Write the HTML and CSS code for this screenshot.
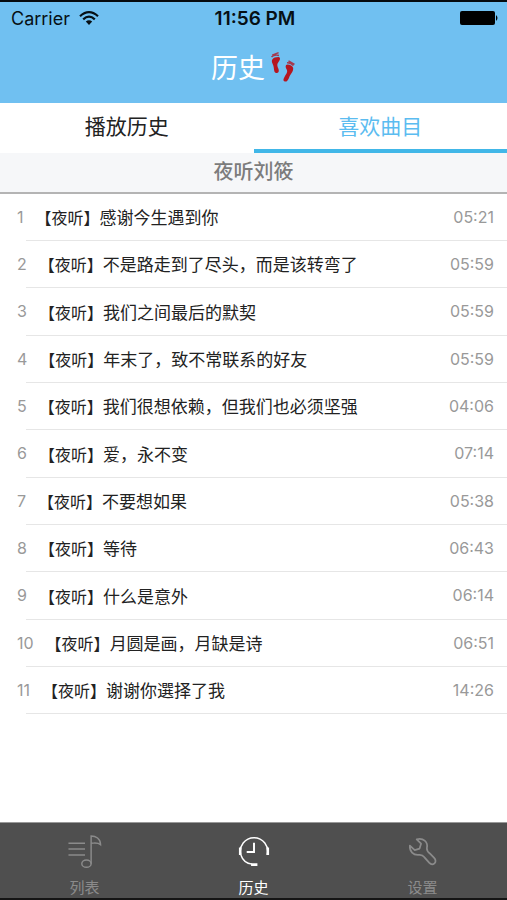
FILE: index.html
```html
<!DOCTYPE html>
<html lang="zh-CN">
<head>
<meta charset="utf-8">
<meta name="viewport" content="width=device-width, initial-scale=1">
<title>历史</title>
<link rel="stylesheet" href="styles.css">
</head>
<body>
<div class="app">
  <header class="header">
    <div class="status">
      <div class="carrier">
        <span>Carrier</span>
        <svg width="20" height="16" viewBox="0 0 20 16" fill="none" stroke="#071015" stroke-width="2.2" aria-hidden="true">
          <path d="M1 6.200Q10-2 19 6.200M4.200 9.400Q10 4 15.800 9.400"/>
          <path d="M6.800 11.600Q10 8.800 13.200 11.600L10 15z" fill="#071015" stroke="none"/>
        </svg>
      </div>
      <span class="clock">11:56 PM</span>
      <svg class="battery" width="39" height="16" viewBox="0 0 39 16" aria-hidden="true">
        <rect x="0" y="1" width="35" height="14" rx="2"/>
        <path d="M36 5q3 3 0 6z"/>
      </svg>
    </div>
    <h1 class="title">
      <span>历史</span>
      <svg width="26" height="32" viewBox="0 0 26 32" fill="#b51620" aria-hidden="true">
        <path d="M2 9C3 6.600 6 6 8.500 6C11 6.500 10 9 8.500 11C6.500 13.500 7.500 15.500 8.500 18C9.500 21 8 22.500 6 22C3.600 21.300 4.300 17.500 3.300 14.500C2.600 12.500 1.400 10.800 2 9z"/>
        <path d="M1.500 6Q4 3.400 9 4.400M2.200 4.300L8.600 1.600" fill="none" stroke="#a43b50" stroke-width="1.500"/>
        <path d="M23.200 17C22.600 14.600 20 13.600 17.500 13.500C15 13.800 15.500 16.500 16.600 18.300C18 20.800 16.500 22.500 15 25C13.500 27.600 12.500 30 15 30.500C18 31 18.500 27.500 20 24.500C21.400 22 23.600 20 23.200 17z"/>
        <path d="M17 11.800Q21 11.500 23.400 14.600M18.500 9.800L24.500 13.300" fill="none" stroke="#a43b50" stroke-width="1.500"/>
      </svg>
    </h1>
  </header>

  <div class="tabs">
    <button class="tab" type="button">播放历史</button>
    <button class="tab tab-active" type="button">喜欢曲目</button>
  </div>

  <main class="content">
    <h2 class="section">夜听刘筱</h2>
    <ol class="tracks">
      <li class="track"><span class="num">1</span><span class="name"><span class="tag">【夜听】</span>感谢今生遇到你</span><time class="time">05:21</time></li>
      <li class="track"><span class="num">2</span><span class="name"><span class="tag">【夜听】</span>不是路走到了尽头，而是该转弯了</span><time class="time">05:59</time></li>
      <li class="track"><span class="num">3</span><span class="name"><span class="tag">【夜听】</span>我们之间最后的默契</span><time class="time">05:59</time></li>
      <li class="track"><span class="num">4</span><span class="name"><span class="tag">【夜听】</span>年末了，致不常联系的好友</span><time class="time">05:59</time></li>
      <li class="track"><span class="num">5</span><span class="name"><span class="tag">【夜听】</span>我们很想依赖，但我们也必须坚强</span><time class="time">04:06</time></li>
      <li class="track"><span class="num">6</span><span class="name"><span class="tag">【夜听】</span>爱，永不变</span><time class="time">07:14</time></li>
      <li class="track"><span class="num">7</span><span class="name"><span class="tag">【夜听】</span>不要想如果</span><time class="time">05:38</time></li>
      <li class="track"><span class="num">8</span><span class="name"><span class="tag">【夜听】</span>等待</span><time class="time">06:43</time></li>
      <li class="track"><span class="num">9</span><span class="name"><span class="tag">【夜听】</span>什么是意外</span><time class="time">06:14</time></li>
      <li class="track"><span class="num">10</span><span class="name"><span class="tag">【夜听】</span>月圆是画，月缺是诗</span><time class="time">06:51</time></li>
      <li class="track"><span class="num">11</span><span class="name"><span class="tag">【夜听】</span>谢谢你選择了我</span><time class="time">14:26</time></li>
    </ol>
  </main>

  <nav class="nav">
    <a class="nav-item" href="#list">
      <svg width="36" height="36" viewBox="0 0 36 36" fill="none" stroke="currentColor" stroke-width="1.500" aria-hidden="true">
        <path d="M1 9.500h17M1 15.500h17M1 21.500h17"/>
        <ellipse cx="19.500" cy="30.500" rx="4.800" ry="3.800"/>
        <path d="M24.300 30.500V2C29 2 34 4.500 34 11C31 8.500 28 9.500 24.300 9.500"/>
      </svg>
      <span>列表</span>
    </a>
    <a class="nav-item nav-active" href="#history">
      <svg width="36" height="36" viewBox="0 0 36 36" fill="none" stroke="currentColor" stroke-width="1.500" aria-hidden="true">
        <path d="M4.500 21.500A14 14 0 1 1 31.500 21.500M4.500 21.500A14 14 0 0 0 16 31"/>
        <path d="M18 9v9.500h-7.500" stroke-width="2"/>
        <path d="M3.800 14v7.500M32.200 14v7.500M15 31.500h6.500" stroke-width="2.600"/>
      </svg>
      <span>历史</span>
    </a>
    <a class="nav-item" href="#settings">
      <svg width="36" height="36" viewBox="0 0 36 36" fill="none" stroke="currentColor" stroke-width="1.800" stroke-linejoin="round" aria-hidden="true">
        <path d="M11.500 5.500C18 3.500 23.500 8 22 14.500C21.800 17 23 18.500 25 20L29.500 24.500C33.500 29 28 33.500 24.300 29.500L19.500 24C18 22 16.500 21 13.500 21.500C8 22 4 18 4.500 12L9.500 16.500L14.500 15L16 10z"/>
      </svg>
      <span>设置</span>
    </a>
  </nav>
</div>
</body>
</html>
```
FILE: styles.css
```css
* {
  box-sizing: border-box;
}

body {
  margin: 0;
  background: #fff;
  color: #222;
  font-family: Inter, "Noto Sans CJK SC", sans-serif;
}

.app {
  display: flex;
  flex-direction: column;
  min-height: 100vh;
}

.header {
  border-top: 2px solid #050a0e;
  background: #70c0f1;
}

.status {
  display: grid;
  grid-template-columns: 1fr auto 1fr;
  align-items: center;
  height: 32px;
  padding: 0 8px 0 11px;
  color: #071015;
  font-size: 18px;
}

.carrier {
  display: flex;
  align-items: center;
  gap: 9px;
}

.clock {
  font-size: 19px;
  font-weight: 600;
}

.battery {
  justify-self: end;
}

.title {
  display: flex;
  align-items: center;
  justify-content: center;
  gap: 5px;
  height: 69px;
  margin: 0;
  padding-bottom: 4px;
  color: #fff;
  font-size: 27px;
  font-weight: 400;
}

.tabs {
  display: flex;
  height: 50px;
}

.tab {
  flex: 1;
  padding: 0 0 3px;
  border: 0;
  border-bottom: 4px solid transparent;
  background: #fff;
  color: #222;
  font: inherit;
  font-size: 21px;
}

.tab-active {
  border-bottom-color: #41b7e8;
  color: #5bbcf0;
}

.content {
  flex: 1;
}

.section {
  margin: 0;
  border-bottom: 2px solid #b4b4b4;
  background: #f6f7f9;
  color: #7c7c7c;
  font-size: 20px;
  font-weight: 500;
  line-height: 39px;
  text-align: center;
}

.tracks {
  margin: 0;
  padding: 0;
  list-style: none;
}

.track {
  display: flex;
  align-items: center;
  height: 47px;
  padding: 0 13px 2px 17px;
  background: linear-gradient(#e6e6e6, #e6e6e6) 26px 100% / 100% 1px no-repeat;
}

.track:nth-child(3n) {
  height: 48px;
}

.num,
.time {
  color: #999;
  font-size: 16px;
}

.name {
  flex: 1;
  margin-left: 12px;
  font-size: 17px;
}

.tag {
  font-size: 16px;
}

.nav {
  display: flex;
  height: 78px;
  border-top: 1px solid #999;
  border-bottom: 2px solid #151515;
  background: #4f4f4f;
}

.nav-item {
  display: flex;
  flex: 1;
  flex-direction: column;
  align-items: center;
  padding-top: 11px;
  color: #8b8b8b;
  font-size: 15px;
  line-height: 20px;
  gap: 9px;
  text-decoration: none;
}

.nav-active {
  color: #fff;
}
```
